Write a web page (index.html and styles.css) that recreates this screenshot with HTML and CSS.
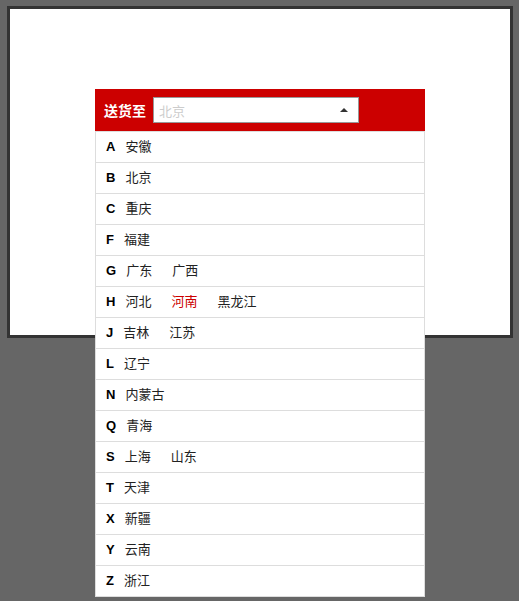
FILE: index.html
```html
<!doctype html>
<html>
<head>
  <meta charset="utf-8">
  <title>送货至</title>
  <link rel="stylesheet" href="styles.css">
</head>
<body>
  <div class="stage">
    <div class="area">
      <div class="area-head">
        <span class="area-label">送货至</span>
        <div class="area-select">
          <span class="area-value">北京</span>
          <span class="area-arrow"></span>
        </div>
      </div>
      <ul class="area-list">
        <li><b>A</b><span>安徽</span></li>
        <li><b>B</b><span>北京</span></li>
        <li><b>C</b><span>重庆</span></li>
        <li><b>F</b><span>福建</span></li>
        <li><b>G</b><span>广东</span><span>广西</span></li>
        <li><b>H</b><span>河北</span><span class="active">河南</span><span>黑龙江</span></li>
        <li><b>J</b><span>吉林</span><span>江苏</span></li>
        <li><b>L</b><span>辽宁</span></li>
        <li><b>N</b><span>内蒙古</span></li>
        <li><b>Q</b><span>青海</span></li>
        <li><b>S</b><span>上海</span><span>山东</span></li>
        <li><b>T</b><span>天津</span></li>
        <li><b>X</b><span>新疆</span></li>
        <li><b>Y</b><span>云南</span></li>
        <li><b>Z</b><span>浙江</span></li>
      </ul>
    </div>
  </div>
</body>
</html>
```

FILE: styles.css
```css
body {
  margin: 0;
  height: 100vh;
  background: #666;
  font-family: "Liberation Sans", "Noto Sans CJK SC", sans-serif;
  font-size: 13px;
  color: #222;
}

.stage {
  width: 500px;
  height: 246px;
  margin: 6px 0 0 7px;
  padding-top: 80px;
  background: #fff;
  border: 3px solid #333;
}

.area {
  position: relative;
  width: 330px;
  margin-left: 85px;
}

.area-head {
  display: flex;
  align-items: center;
  height: 42px;
  padding-left: 9px;
  background: #c00;
}

.area-label {
  color: #fff;
  font-weight: bold;
  font-size: 14px;
}

.area-select {
  position: relative;
  display: flex;
  align-items: center;
  width: 206px;
  height: 26px;
  margin-left: 7px;
  padding-left: 5px;
  box-sizing: border-box;
  background: #fff;
  border: 1px solid #999;
}

.area-value {
  color: #ccc;
  font-size: 13px;
}

.area-arrow {
  position: absolute;
  right: 10px;
  top: 10px;
  width: 0;
  height: 0;
  border-left: 4px solid transparent;
  border-right: 4px solid transparent;
  border-bottom: 4px solid #333;
}

/* dropdown hangs over the box below */
.area-list {
  position: absolute;
  top: 42px;
  left: 0;
  width: 330px;
  margin: 0;
  padding: 0;
  list-style: none;
  box-sizing: border-box;
  background: #fff;
  border: 1px solid #ddd;
  border-bottom: none;
}

.area-list li {
  display: flex;
  align-items: center;
  height: 29px;
  padding: 0 0 1px 10px;
  line-height: 1;
  border-bottom: 1px solid #ddd;
}

.area-list b {
  margin-right: 10px;
  font-size: 13px;
  color: #000;
}

.area-list span {
  margin-right: 20px;
}

.area-list .active {
  color: #c00;
}
```
